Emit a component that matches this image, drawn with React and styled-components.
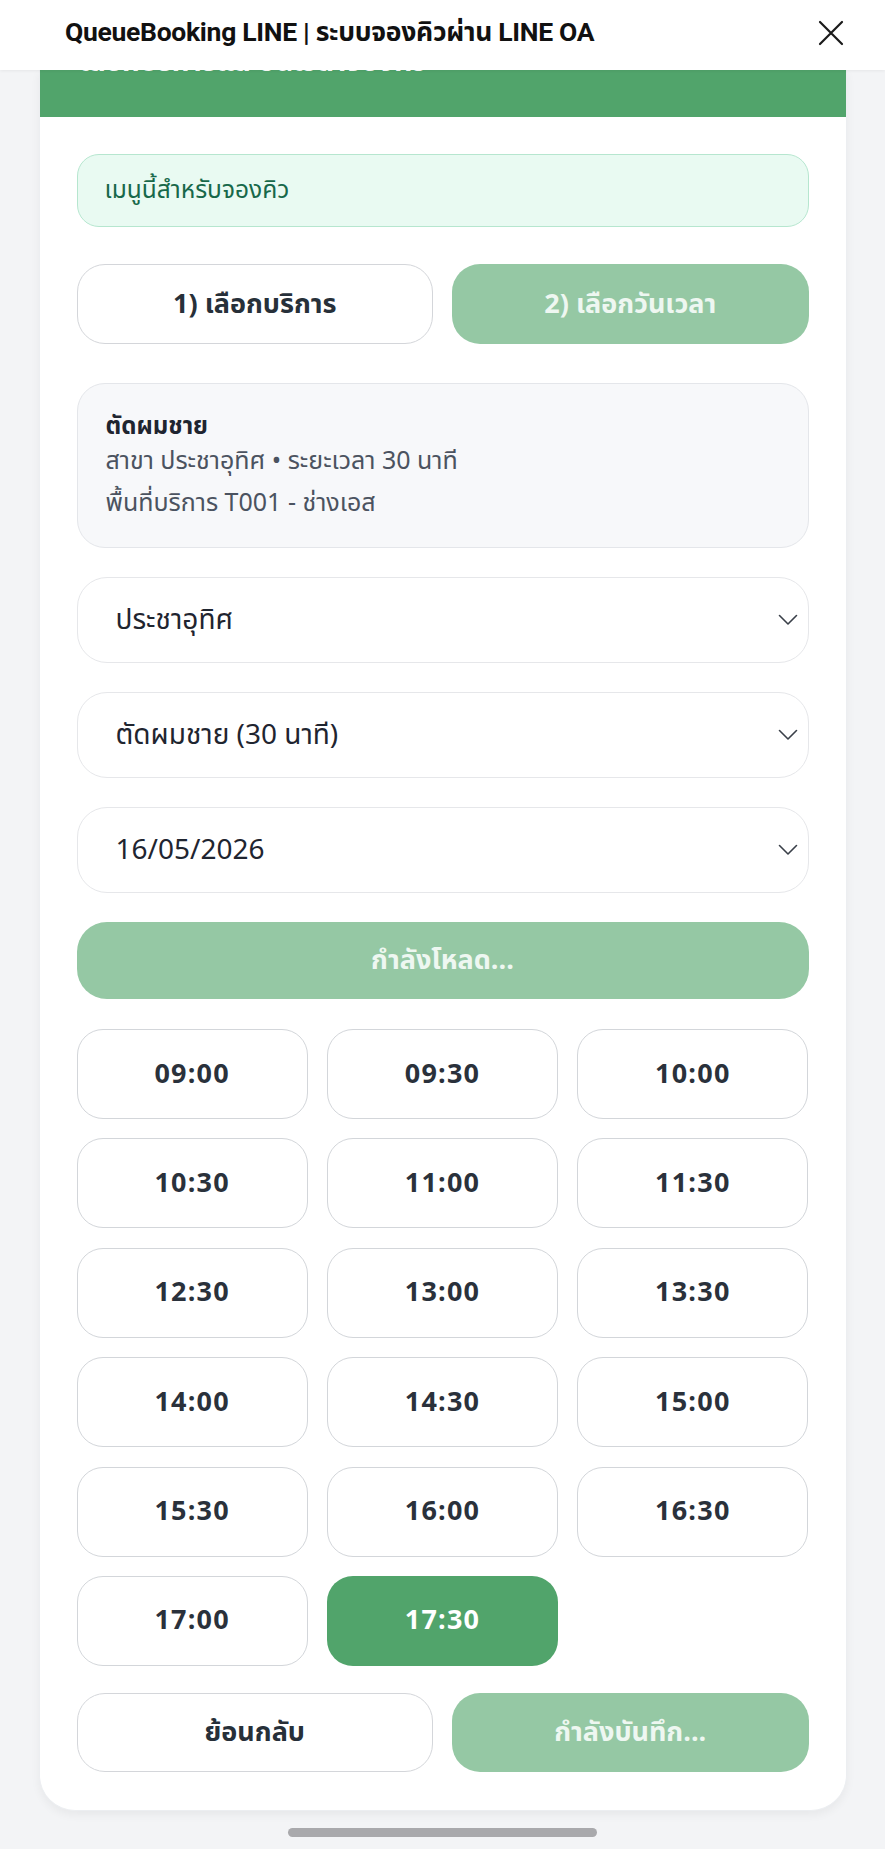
import React from "react";
import styled, { createGlobalStyle } from "styled-components";

const Global = createGlobalStyle`
  html, body { margin: 0; padding: 0; background: #f3f4f6; }
  body { font-family: "Noto Sans Thai", "Noto Sans", "Liberation Sans", sans-serif; color: #1f2937; }
  * { box-sizing: border-box; }
`;

const Page = styled.div`
  width: 885px;
  min-height: 1849px;
  background: #f3f4f6;
  display: flex;
  flex-direction: column;
  align-items: center;
`;

const TopBar = styled.header`
  width: 100%;
  height: 70px;
  background: #ffffff;
  display: flex;
  align-items: center;
  justify-content: space-between;
  padding: 0 40px 4px 65px;
  box-shadow: 0 1px 3px rgba(0, 0, 0, 0.06);
  position: relative;
  z-index: 2;
`;

const TopTitle = styled.h1`
  margin: 0;
  font-family: Roboto, "Noto Sans Thai", "Noto Sans", sans-serif;
  font-weight: 700;
  font-size: 26.5px;
  letter-spacing: -0.3px;
  color: #111111;
`;

const CloseButton = styled.button`
  width: 28px;
  height: 28px;
  border: 0;
  background: transparent;
  padding: 0;
  display: flex;
  align-items: center;
  justify-content: center;
  color: #1a1a1a;
`;

const Card = styled.main`
  width: 808px;
  background: #ffffff;
  border: 1px solid #eceef1;
  border-top: 0;
  border-radius: 0 0 36px 36px;
  box-shadow: 0 4px 10px rgba(0, 0, 0, 0.05);
  overflow: hidden;
`;

const Band = styled.div`
  height: 47px;
  background: #51a46b;
  overflow: hidden;
  padding-left: 40px;
`;

const BandTitle = styled.div`
  margin-top: -22px;
  font-size: 28px;
  font-weight: 700;
  color: #ffffff;
  line-height: 30px;
`;

const Body = styled.div`
  padding: 37px 37px 38px 37px;
  display: flex;
  flex-direction: column;
`;

const Notice = styled.div`
  height: 73px;
  border-radius: 22px;
  background: #e9faf2;
  border: 1.5px solid #b6e6cf;
  color: #17684a;
  font-size: 24.5px;
  display: flex;
  align-items: center;
  padding-left: 27px;
`;

const StepRow = styled.div`
  margin-top: 37px;
  display: grid;
  grid-template-columns: 1fr 1fr;
  gap: 19px;
`;

const Pill = styled.button`
  height: ${(p) => p.$h || 80}px;
  border-radius: 28px;
  font-family: inherit;
  font-size: 27px;
  font-weight: 700;
  display: flex;
  align-items: center;
  justify-content: center;
  border: ${(p) => (p.$variant === "soft" ? "0" : "1.5px solid #d4d6da")};
  background: ${(p) => (p.$variant === "soft" ? "#95c8a4" : "#ffffff")};
  color: ${(p) => (p.$variant === "soft" ? "#eef7f1" : "#273039")};
  padding: 0;
`;

const Info = styled.section`
  margin-top: 39px;
  height: 165px;
  border-radius: 28px;
  background: #f7f8fa;
  border: 1.5px solid #e4e6ea;
  padding: 26px 28px 0 28px;
  display: flex;
  flex-direction: column;
`;

const InfoTitle = styled.div`
  font-size: 24px;
  font-weight: 700;
  color: #1f2530;
  line-height: 34px;
`;

const InfoLine = styled.div`
  font-size: 25px;
  color: #4b5360;
  line-height: 34px;
  margin-top: ${(p) => p.$gap || 0}px;
`;

const Select = styled.div`
  margin-top: 29px;
  height: 86px;
  border-radius: 30px;
  border: 1.5px solid #e6e7ea;
  background: #ffffff;
  display: flex;
  align-items: center;
  justify-content: space-between;
  padding: 0 10px 0 38px;
  font-size: 28px;
  color: #1f2530;
`;

const Chevron = () => (
  <svg width="20" height="12" viewBox="0 0 20 12" fill="none">
    <path d="M1.5 1.5 L10 10 L18.5 1.5" stroke="#3a4049" strokeWidth="1.6" strokeLinecap="round" strokeLinejoin="round" />
  </svg>
);

const LoadBar = styled(Pill)`
  margin-top: 29px;
  width: 100%;
  border-radius: 30px;
`;

const Grid = styled.div`
  margin-top: 30px;
  display: grid;
  grid-template-columns: repeat(3, 1fr);
  column-gap: 19px;
  row-gap: 19.4px;
`;

const Slot = styled.button`
  height: 90px;
  border-radius: 26px;
  font-family: "Noto Sans Thai", "Noto Sans", sans-serif;
  font-size: 27px;
  font-weight: 700;
  letter-spacing: 1.2px;
  padding: 0;
  border: ${(p) => (p.$active ? "0" : "1.5px solid #d3d6da")};
  background: ${(p) => (p.$active ? "#51a46b" : "#ffffff")};
  color: ${(p) => (p.$active ? "#ffffff" : "#2a313b")};
`;

const Footer = styled.div`
  margin-top: 27px;
  display: grid;
  grid-template-columns: 1fr 1fr;
  gap: 19px;
`;

const HomeBar = styled.div`
  margin-top: 17px;
  width: 309px;
  height: 9px;
  border-radius: 5px;
  background: #a9a9ac;
`;

const times = [
  "09:00", "09:30", "10:00",
  "10:30", "11:00", "11:30",
  "12:30", "13:00", "13:30",
  "14:00", "14:30", "15:00",
  "15:30", "16:00", "16:30",
  "17:00", "17:30",
];

export default function App() {
  return (
    <>
      <Global />
      <Page>
        <TopBar>
          <TopTitle>QueueBooking LINE | ระบบจองคิวผ่าน LINE OA</TopTitle>
          <CloseButton aria-label="close">
            <svg width="26" height="26" viewBox="0 0 26 26">
              <path d="M2 2 L24 24 M24 2 L2 24" stroke="#1a1a1a" strokeWidth="2.2" strokeLinecap="round" />
            </svg>
          </CloseButton>
        </TopBar>
        <Card>
          <Band>
            <BandTitle>เลือกบริการและวันเวลาจองคิว</BandTitle>
          </Band>
          <Body>
            <Notice>เมนูนี้สำหรับจองคิว</Notice>
            <StepRow>
              <Pill>1) เลือกบริการ</Pill>
              <Pill $variant="soft">2) เลือกวันเวลา</Pill>
            </StepRow>
            <Info>
              <InfoTitle>ตัดผมชาย</InfoTitle>
              <InfoLine>สาขา ประชาอุทิศ • ระยะเวลา 30 นาที</InfoLine>
              <InfoLine $gap={8}>พื้นที่บริการ T001 - ช่างเอส</InfoLine>
            </Info>
            <Select>
              <span>ประชาอุทิศ</span>
              <Chevron />
            </Select>
            <Select>
              <span>ตัดผมชาย (30 นาที)</span>
              <Chevron />
            </Select>
            <Select>
              <span>16/05/2026</span>
              <Chevron />
            </Select>
            <LoadBar $variant="soft" $h={77}>กำลังโหลด...</LoadBar>
            <Grid>
              {times.map((t) => (
                <Slot key={t} $active={t === "17:30"}>{t}</Slot>
              ))}
            </Grid>
            <Footer>
              <Pill $h={79}>ย้อนกลับ</Pill>
              <Pill $variant="soft" $h={79}>กำลังบันทึก...</Pill>
            </Footer>
          </Body>
        </Card>
        <HomeBar />
      </Page>
    </>
  );
}
